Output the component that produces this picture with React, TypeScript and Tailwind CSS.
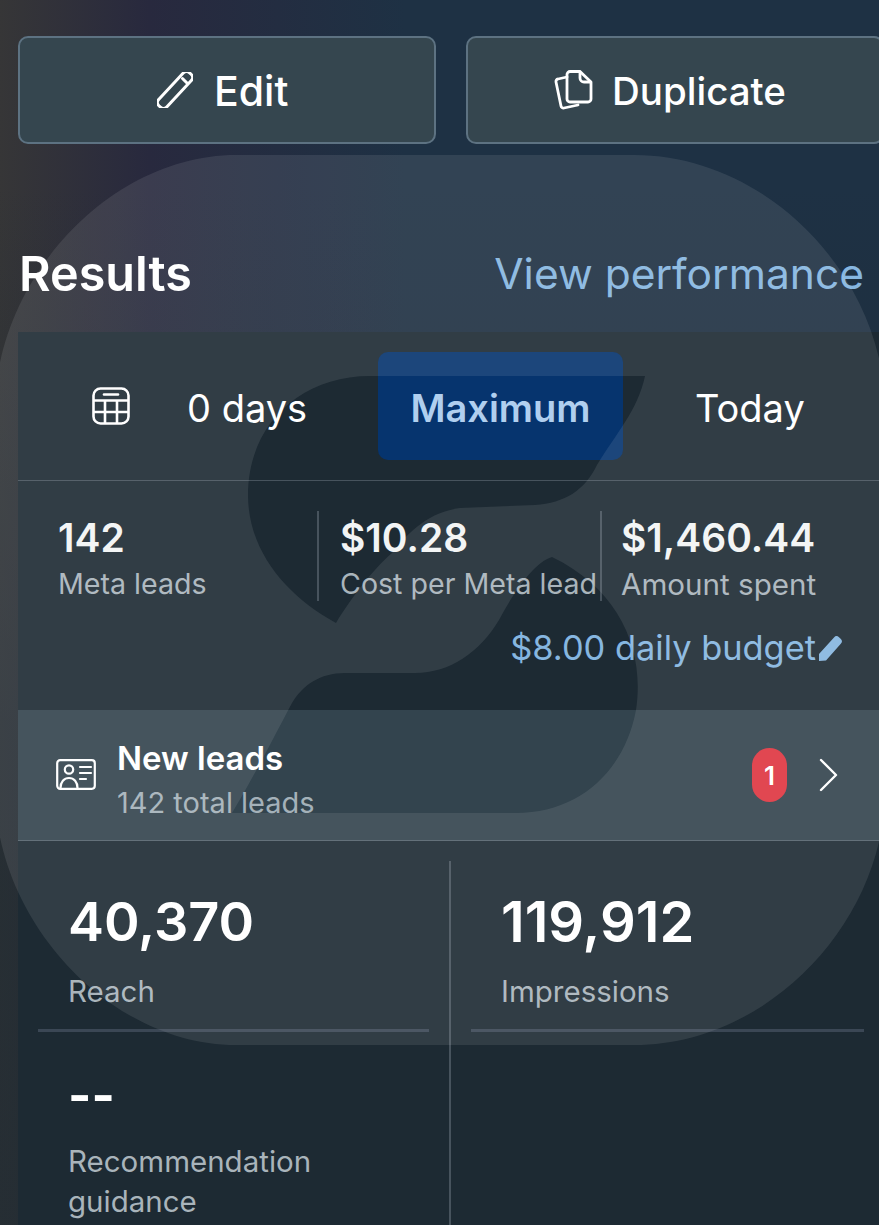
const font = "font-['Inter',sans-serif]";

function PencilIcon() {
  return (
    <svg width="36" height="36" viewBox="0 0 36 36" fill="none" stroke="white" strokeWidth="3" strokeLinejoin="round" strokeLinecap="round" className="shrink-0">
      <rect x="12.5" y="-4.5" width="11" height="45" rx="4.5" transform="rotate(43 18 18)" />
      <path d="M25.5 6.5l5 5" />
    </svg>
  );
}

function CopyIcon() {
  return (
    <svg width="40" height="42" viewBox="0 0 40 42" fill="none" stroke="white" strokeWidth="2.8" strokeLinejoin="round" strokeLinecap="round" className="shrink-0">
      <path d="M17 2.5h10L38 13v17a3 3 0 0 1-3 3H17a3 3 0 0 1-3-3V5.5a3 3 0 0 1 3-3Z" />
      <path d="M27 3v6a4 4 0 0 0 4 4h6" />
      <path d="M14 8 5 10a2.5 2.5 0 0 0-2 3l5 24a2.5 2.5 0 0 0 3 2l14-3" />
    </svg>
  );
}

function CalendarIcon() {
  return (
    <svg width="38" height="38" viewBox="0 0 38 38" fill="none" stroke="white" strokeWidth="2.6" strokeLinejoin="round">
      <rect x="1.5" y="1.5" width="35" height="35" rx="7" />
      <path d="M1.5 13.5h35M1.5 25h35M13 13.5v23M25 13.5v23" />
      <path d="M12 7.5h14" strokeLinecap="round" />
    </svg>
  );
}

function LeadCardIcon() {
  return (
    <svg width="40" height="32" viewBox="0 0 40 32" fill="none" stroke="white" strokeWidth="2.2" strokeLinecap="round">
      <rect x="1.2" y="1.2" width="37.6" height="28.6" rx="3" />
      <circle cx="13" cy="10.5" r="4.2" />
      <path d="M4.5 29c0-6 3.5-10 8.5-10s8.5 4 8.5 10" />
      <path d="M24 8h11M24 14h11M24 20h6" />
    </svg>
  );
}

function FilledPencil() {
  return (
    <svg width="26" height="28" viewBox="0 0 26 28" fill="#86b6e0">
      <path d="M1 20 16 3.5a3.5 3.5 0 0 1 5-.2l1.6 1.5a3.5 3.5 0 0 1 .2 5L8 26.5 1 27Z" />
    </svg>
  );
}

// lighter rounded blob over the whole page, with the S cut out of it
function Watermark() {
  return (
    <svg className="absolute inset-0 pointer-events-none" width="879" height="1225" viewBox="0 0 879 1225">
      <path
        fill="white"
        fillOpacity="0.09"
        fillRule="evenodd"
        d="M236 155H634C770 155 885 280 885 410V790C885 920 770 1045 634 1045H236C110 1045 -5 920 -5 790V410C-5 280 110 155 236 155Z
           M645 376H370C300 376 248 425 248 495C248 550 285 595 336 623C350 600 372 570 392 553C410 530 430 512 460 508L535 505C565 503 585 490 597 465C615 435 638 410 645 376Z
           M552 557C535 562 515 590 499 620C480 652 450 673 415 673H345C320 673 303 685 292 703C275 735 252 780 232 813H516C580 813 625 770 636 710C645 650 620 590 552 557Z"
      />
    </svg>
  );
}

function Stat({ value, label, className, labelSize }: { value: string; label: string; className: string; labelSize: string }) {
  return (
    <div className={className}>
      <div className="text-[39px] leading-[40px] font-semibold text-[#f2f4f5] mt-[7px] whitespace-nowrap">{value}</div>
      <div className={`${labelSize} leading-[36px] text-[#a9b4bb] mt-[8px] whitespace-nowrap`}>{label}</div>
    </div>
  );
}

export default function App() {
  return (
    <div className={`relative w-[879px] h-[1225px] overflow-hidden bg-[linear-gradient(to_bottom,transparent_15%,#1e2a3299_60%,#1e2a32aa_100%),linear-gradient(to_right,#363637_0%,#28293e_17%,#1e3144_46%)] ${font}`}>
      <div className="flex gap-[30px] pl-[18px] pt-[36px] w-[1000px]">
        <button className="w-[418px] h-[108px] flex items-center gap-[21px] pl-[137px] bg-[#35464f] border-2 border-[#5d7282] rounded-[10px] text-white text-[41px] font-medium">
          <PencilIcon />
          <span className="pt-[3px]">Edit</span>
        </button>
        <button className="w-[418px] h-[108px] flex items-center gap-[19px] pl-[85px] bg-[#35464f] border-2 border-[#5d7282] rounded-[10px] text-white text-[38.5px] font-medium">
          <CopyIcon />
          <span className="pt-[3px]">Duplicate</span>
        </button>
      </div>

      <div className="flex items-center justify-between pl-[19px] pr-[15px] mt-[100px] h-[60px]">
        <h2 className="text-[48.5px] font-semibold text-white">Results</h2>
        <span className="text-[42.5px] text-[#86b6e0]">View performance</span>
      </div>

      <div className="ml-[18px] mt-[28px] h-[893px] bg-[#1d2a33] flex flex-col">
        <div className="h-[149px] flex items-center pl-[74px] border-b border-[#47535d] shrink-0">
          <CalendarIcon />
          <span className="ml-[57px] w-[191px] text-[38px] text-white pt-[5px]">0 days</span>
          <span className="w-[245px] h-[108px] flex items-center justify-center bg-[#06346e] rounded-[10px] text-[38px] font-semibold text-[#b0cfef] shrink-0 pt-[5px]">Maximum</span>
          <span className="ml-[72px] text-[38px] text-white pt-[5px]">Today</span>
        </div>

        <div className="flex pt-[30px] shrink-0">
          <Stat value="142" label="Meta leads" labelSize="text-[28.6px]" className="w-[301px] h-[90px] pl-[40px] border-r-2 border-[#47535d]" />
          <Stat value="$10.28" label="Cost per Meta lead" labelSize="text-[28.6px]" className="w-[283px] h-[90px] pl-[21px] border-r-2 border-[#47535d]" />
          <Stat value="$1,460.44" label="Amount spent" labelSize="text-[29.6px]" className="pl-[19px] h-[90px]" />
        </div>

        <div className="flex items-center justify-end gap-[2px] pr-[35px] h-[48px] mt-[23px] shrink-0 text-[34.4px] text-[#86b6e0]">
          $8.00 daily budget
          <FilledPencil />
        </div>

        <div className="h-[131px] mt-[38px] flex items-center pl-[38px] pr-[40px] bg-[#33444e] border-b border-[#55636d] shrink-0">
          <LeadCardIcon />
          <div className="ml-[21px] flex flex-col pt-[8px]">
            <span className="text-[33px] leading-[40px] font-semibold text-white">New leads</span>
            <span className="text-[29px] leading-[36px] mt-[7px] text-[#a4b1b9]">142 total leads</span>
          </div>
          <span className="ml-auto w-[35px] h-[54px] rounded-full bg-[#de3540] flex items-center justify-center text-[26px] font-semibold text-white">1</span>
          <svg className="ml-[32px]" width="20" height="34" viewBox="0 0 20 34" fill="none" stroke="white" strokeWidth="2.4" strokeLinecap="round" strokeLinejoin="round">
            <path d="M2 2l15 15L2 32" />
          </svg>
        </div>

        <div className="grid grid-cols-[433px_1fr] mt-[20px] flex-1 min-h-0">
          <div className="flex flex-col border-r-2 border-[#47535d] pl-[20px] pr-[20px]">
            <div className="border-b-3 border-[#3b4755] h-[171px] pl-[30px] pt-[31px]">
              <div className="text-[54px] leading-[60px] font-semibold text-white">40,370</div>
              <div className="text-[29.5px] leading-[40px] text-[#a9b4bb] mt-[19px]">Reach</div>
            </div>
            <div className="pl-[30px]">
              <div className="text-[50px] leading-[60px] font-bold text-white mt-[33px]">--</div>
              <div className="text-[29.5px] leading-[40px] text-[#a9b4bb] mt-[16px] w-[280px]">Recommendation guidance</div>
            </div>
          </div>
          <div className="flex flex-col pl-[20px] pr-[15px]">
            <div className="border-b-3 border-[#3b4755] h-[171px] pl-[30px] pt-[31px]">
              <div className="text-[56px] leading-[60px] font-semibold text-white">119,912</div>
              <div className="text-[29.5px] leading-[40px] text-[#a9b4bb] mt-[19px]">Impressions</div>
            </div>
          </div>
        </div>
      </div>

      <Watermark />
    </div>
  );
}
